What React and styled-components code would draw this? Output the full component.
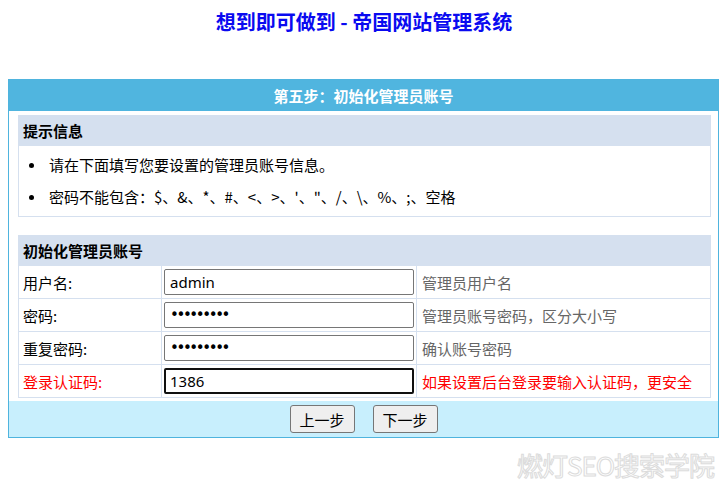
import React from 'react'
import styled, { createGlobalStyle } from 'styled-components';

const GlobalStyle = createGlobalStyle`
    body {
        margin: 0;
        background: #fff;
        font-family: "Noto Sans CJK SC", "Noto Sans", sans-serif;
        font-size: 15px;
        color: #000;
    }
`;

const Page = styled.div`
    position: relative;
    width: 720px;
    height: 497px;
    overflow: hidden;
`;

const Title = styled.div`
    height: 79px;
    padding-top: 9px;
    box-sizing: border-box;
    text-align: center;
    font-size: 20px;
    line-height: 26px;
    font-weight: bold;
    color: #0a0af0;
    padding-left: 8px;
`;

const Frame = styled.div`
    margin-left: 8px;
    width: 711px;
    box-sizing: border-box;
    border: 1px solid #4fb4de;
`;

const StepBar = styled.div`
    height: 31px;
    line-height: 31px;
    background: #50b5df;
    color: #fff;
    font-weight: bold;
    font-size: 15px;
    text-align: center;
`;

const Content = styled.div`
    padding: 4px 7px 3px 9px;
`;

const TipBox = styled.div`
    border: 1px solid #d5e0ef;
    margin-bottom: 18px;
`;

const BandHead = styled.div`
    background: #d5e0ef;
    height: 30px;
    line-height: 30px;
    padding-left: 4px;
    font-weight: bold;
`;

const TipList = styled.ul`
    margin: 0;
    padding: 3px 0 3px 10px;
    line-height: 32px;
    list-style: none;
`;

const TipItem = styled.li`
    display: flex;
    align-items: center;

    &::before {
        content: '';
        width: 5px;
        height: 5px;
        border-radius: 50%;
        background: #000;
        margin-right: 15px;
        flex-shrink: 0;
    }
`;

const FormTable = styled.table`
    width: 100%;
    border-collapse: collapse;
    border: 1px solid #d5e0ef;

    td {
        border: 1px solid #d5e0ef;
        height: 32px;
        padding: 0;
        vertical-align: middle;
    }
`;

const HeadCell = styled.td`
    && {
        background: #d5e0ef;
        height: 29px;
        padding-left: 4px;
        font-weight: bold;
    }
`;

const LabelCell = styled.td`
    && {
        width: 138px;
        padding-left: 4px;
        color: ${({warn}) => (warn ? '#ff0000' : '#000')};
    }
`;

const InputCell = styled.td`
    && {
        width: 252px;
        padding-left: 2px;
    }
`;

const NoteCell = styled.td`
    && {
        padding-left: 5px;
        color: ${({warn}) => (warn ? '#ff0000' : '#666')};
    }
`;

const Field = styled.input`
    display: block;
    width: 250px;
    height: 26px;
    box-sizing: border-box;
    margin: 0;
    border: ${({focus}) => (focus ? '2px solid #101010' : '1px solid #767676')};
    padding: 0 5px 0 ${({focus}) => (focus ? '4px' : '5px')};
    border-radius: 2px;
    font-family: "Noto Sans", "Noto Sans CJK SC", sans-serif;
    font-size: 15px;
    color: #000;
    outline: none;
    background: #fff;

    &[type='password'] {
        font-family: "DejaVu Sans", sans-serif;
        font-size: 15px;
        letter-spacing: -2.4px;
    }
`;

const Footer = styled.div`
    background: #c8effd;
    height: 36px;
    display: flex;
    justify-content: center;
    align-items: center;
    gap: 18px;
`;

const Btn = styled.button`
    width: 65px;
    height: 28px;
    padding: 0;
    background: #efefef;
    border: 1px solid #767676;
    border-radius: 3px;
    font-family: "Noto Sans CJK SC", sans-serif;
    font-size: 15px;
    color: #000;
`;

const Watermark = styled.div`
    position: absolute;
    right: 6px;
    top: 448px;
    font-size: 26px;
    line-height: 34px;
    color: #fff;
    -webkit-text-stroke: 1px #dcdcdc;
    text-shadow: 0 0 1px #e6e6e6;
    font-family: "Noto Sans CJK SC", sans-serif;
    letter-spacing: -1px;
`;

const rows = [
    { label: '用户名:', type: 'text', value: 'admin', note: '管理员用户名' },
    { label: '密码:', type: 'password', value: '123456789', note: '管理员账号密码，区分大小写' },
    { label: '重复密码:', type: 'password', value: '123456789', note: '确认账号密码' },
    { label: '登录认证码:', type: 'text', value: '1386', note: '如果设置后台登录要输入认证码，更安全', warn: true },
];

const App = () => {
    return (
        <>
        <GlobalStyle />
        <Page>
            <Title>想到即可做到 - 帝国网站管理系统</Title>
            <Frame>
                <StepBar>第五步：初始化管理员账号</StepBar>
                <Content>
                    <TipBox>
                        <BandHead>提示信息</BandHead>
                        <TipList>
                            <TipItem>请在下面填写您要设置的管理员账号信息。</TipItem>
                            <TipItem>密码不能包含：$、&amp;、*、#、&lt;、&gt;、'、"、/、\、%、;、空格</TipItem>
                        </TipList>
                    </TipBox>
                    <FormTable>
                        <tbody>
                            <tr>
                                <HeadCell colSpan={3}>初始化管理员账号</HeadCell>
                            </tr>
                            {rows.map((r) => (
                                <tr key={r.label}>
                                    <LabelCell warn={r.warn}>{r.label}</LabelCell>
                                    <InputCell>
                                        <Field type={r.type} defaultValue={r.value} focus={r.warn} readOnly />
                                    </InputCell>
                                    <NoteCell warn={r.warn}>{r.note}</NoteCell>
                                </tr>
                            ))}
                        </tbody>
                    </FormTable>
                </Content>
                <Footer>
                    <Btn>上一步</Btn>
                    <Btn>下一步</Btn>
                </Footer>
            </Frame>
            <Watermark>燃灯SEO搜索学院</Watermark>
        </Page>
        </>
    );
}

export default App
